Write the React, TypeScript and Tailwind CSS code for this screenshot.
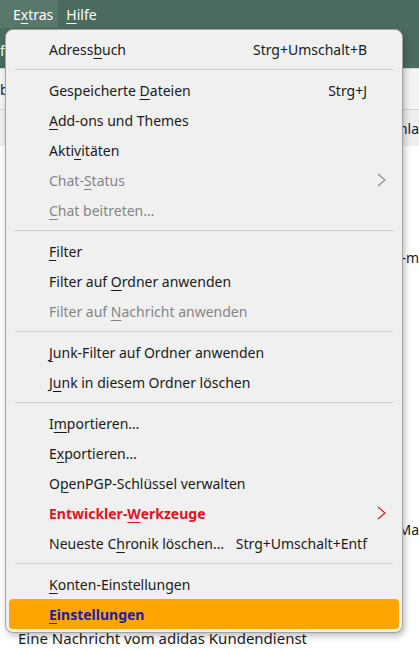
import React from "react";

type Entry =
  | { sep: true }
  | {
      sep?: false;
      label: React.ReactNode;
      shortcut?: string;
      submenu?: boolean;
      disabled?: boolean;
      kind?: "dev" | "active";
    };

const U = ({ children }: { children: React.ReactNode }) => (
  <span className="underline underline-offset-[3px] decoration-1">{children}</span>
);

const entries: Entry[] = [
  { label: <>Adress<U>b</U>uch</>, shortcut: "Strg+Umschalt+B" },
  { sep: true },
  { label: <>Gespeicherte <U>D</U>ateien</>, shortcut: "Strg+J" },
  { label: <><U>A</U>dd-ons und Themes</> },
  { label: <>Akti<U>v</U>itäten</> },
  { label: <>Chat-<U>S</U>tatus</>, submenu: true, disabled: true },
  { label: <><U>C</U>hat beitreten…</>, disabled: true },
  { sep: true },
  { label: <><U>F</U>ilter</> },
  { label: <>Filter auf <U>O</U>rdner anwenden</> },
  { label: <>Filter auf <U>N</U>achricht anwenden</>, disabled: true },
  { sep: true },
  { label: <><U>J</U>unk-Filter auf Ordner anwenden</> },
  { label: <>J<U>u</U>nk in diesem Ordner löschen</> },
  { sep: true },
  { label: <>I<U>m</U>portieren…</> },
  { label: <>E<U>x</U>portieren…</> },
  { label: <>O<U>p</U>enPGP-Schlüssel verwalten</> },
  { label: <>Entwickler-<U>W</U>erkzeuge</>, submenu: true, kind: "dev" },
  { label: <>Neueste C<U>h</U>ronik löschen…</>, shortcut: "Strg+Umschalt+Entf" },
  { sep: true },
  { label: <><U>K</U>onten-Einstellungen</> },
  { label: <><U>E</U>instellungen</>, kind: "active" },
];

function Chevron({ color }: { color: string }) {
  return (
    <svg width="9" height="14" viewBox="0 0 9 14" fill="none">
      <path d="M1 1 L8 7 L1 13" stroke={color} strokeWidth="1.1" />
    </svg>
  );
}

export default function App() {
  return (
    <div
      className="relative h-[650px] w-[419px] overflow-hidden bg-white text-[14px] text-[#1a1a1a]"
      style={{ fontFamily: '"Noto Sans", "Liberation Sans", sans-serif' }}
    >
      {/* app chrome behind the menu */}
      <div className="flex h-[28px] items-center bg-[#4b6b60] text-[14px] text-white">
        <div className="flex h-full items-center bg-[#58786c] pl-[13px] pr-[5px]">
          E<U>x</U>tras
        </div>
        <div className="pl-[8px]">
          <U>H</U>ilfe
        </div>
      </div>
      <div className="flex h-[40px] items-center bg-[#4b6b60] pt-[4px] text-white">
        <span>f</span>
      </div>
      <div className="flex h-[42px] items-center border-y border-[#d6d6d6] bg-[#f3f3f3]">
        <span>b</span>
      </div>
      <div className="flex h-[36px] items-center justify-end bg-[#efefef]">
        <span>hla</span>
      </div>
      <div className="flex h-[474px] flex-col items-end bg-white">
        <span className="mt-[101px]">-m</span>
        <span className="mt-[251px]">Ma</span>
      </div>
      <div className="whitespace-nowrap pl-[18px] pt-[7px] text-[15px]">Eine Nachricht vom adidas Kundendienst</div>

      {/* open menu */}
      <div className="absolute left-[5px] top-[29px] w-[398px] rounded-[8px] border border-[#a3a3a3] bg-[#f0f0f0] px-[3px] pb-[3px] pt-[4px] shadow-[2px_3px_6px_rgba(0,0,0,0.25)]">
        {entries.map((e, i) =>
          e.sep ? (
            <div key={i} className="flex h-[11px] items-center px-[6px]">
              <div className="h-px w-full bg-[#d0d0d0]" />
            </div>
          ) : (
            <div
              key={i}
              className={
                "flex h-[30px] items-center whitespace-nowrap rounded-[4px] pl-[40px] " +
                (e.kind === "active" ? "bg-[#ffa500] " : "") +
                (e.submenu ? "pr-[13px]" : "pr-[32px]")
              }
            >
              <span
                className={
                  "flex-1 " +
                  (e.disabled
                    ? "text-[#858585]"
                    : e.kind === "dev"
                    ? "font-bold text-[#e8101c]"
                    : e.kind === "active"
                    ? "font-bold text-[#1b1bb5]"
                    : "")
                }
              >
                {e.label}
              </span>
              {e.shortcut && <span>{e.shortcut}</span>}
              {e.submenu && <Chevron color={e.kind === "dev" ? "#e8101c" : "#8a8a8a"} />}
            </div>
          )
        )}
      </div>
    </div>
  );
}
